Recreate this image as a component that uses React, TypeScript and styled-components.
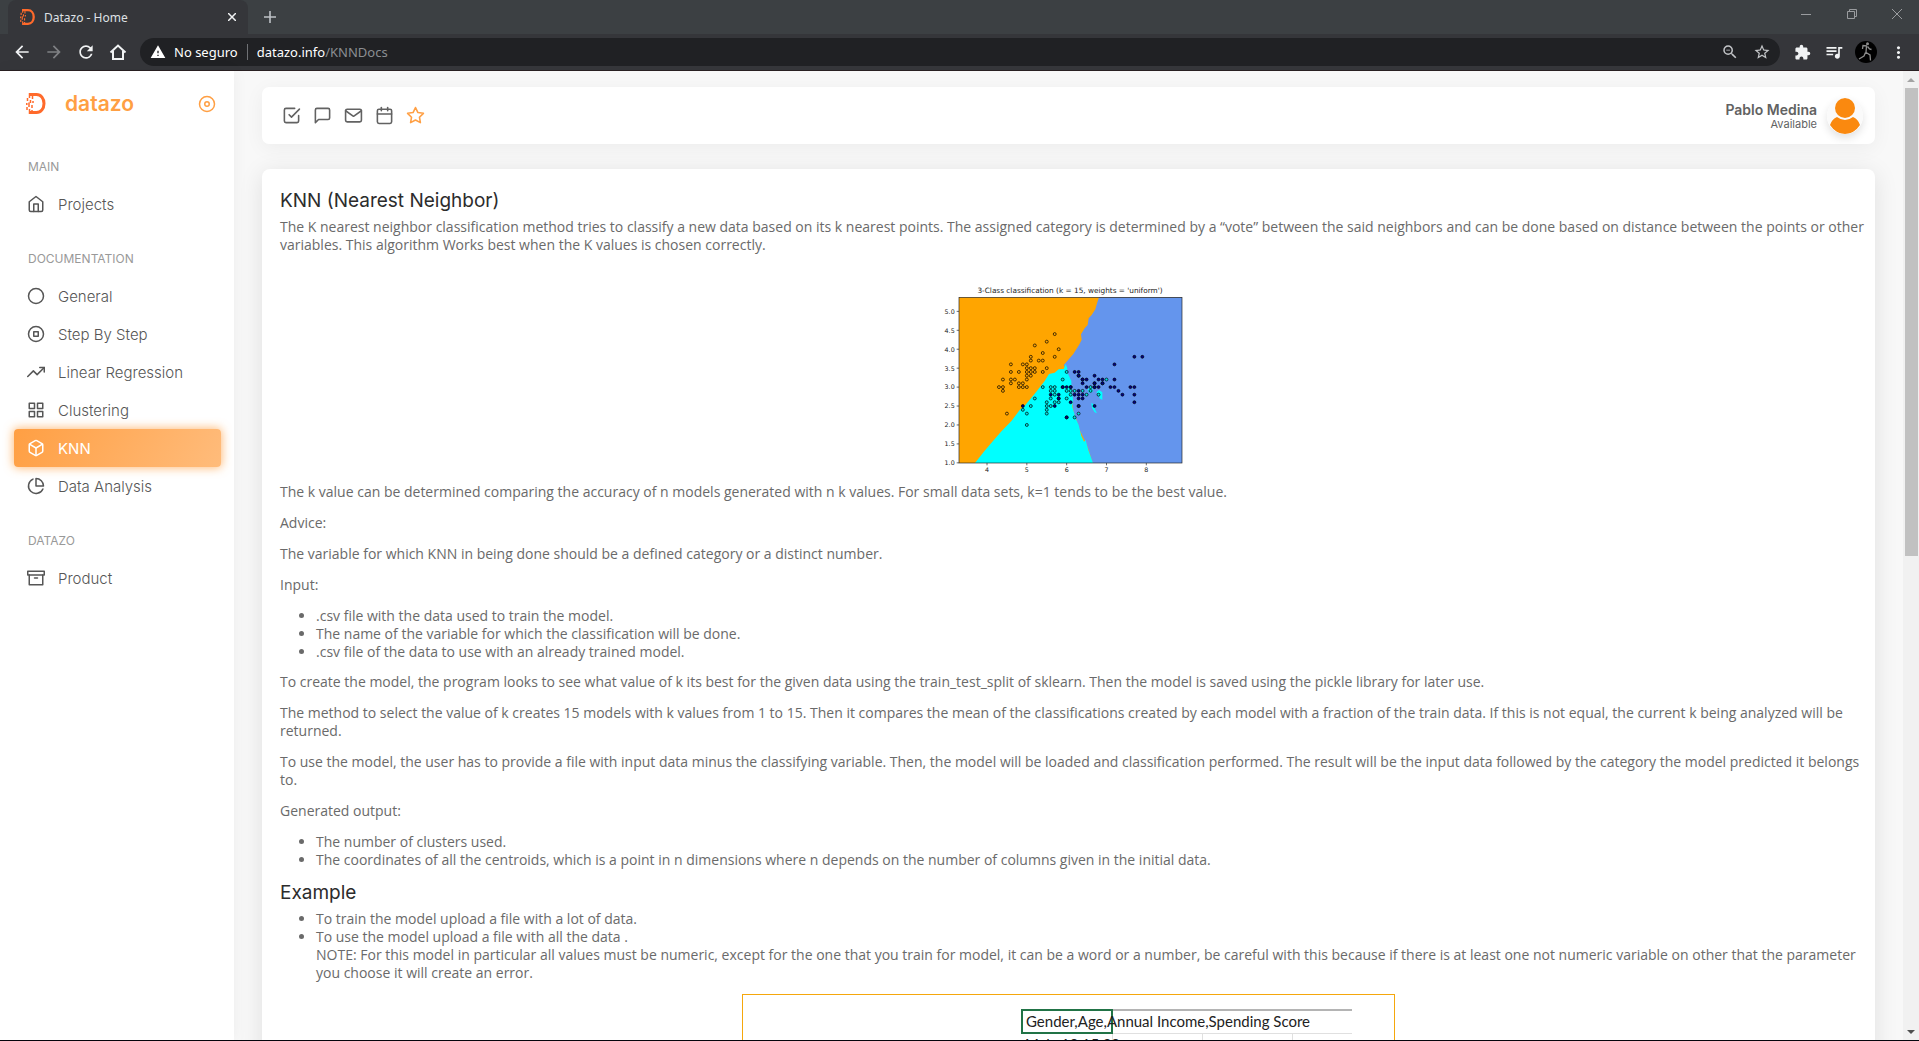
import React from "react";
import styled, { createGlobalStyle, css } from "styled-components";
import {
  FiArchive,
  FiBox,
  FiCalendar,
  FiCheckSquare,
  FiCircle,
  FiDisc,
  FiGrid,
  FiHome,
  FiMail,
  FiMessageSquare,
  FiPieChart,
  FiStar,
  FiStopCircle,
  FiTrendingUp,
} from "react-icons/fi";
import {
  MdArrowBack,
  MdArrowForward,
  MdExtension,
  MdMoreVert,
  MdQueueMusic,
  MdRefresh,
  MdStarBorder,
  MdWarning,
  MdZoomOut,
} from "react-icons/md";

const uiFont = `"Noto Sans", "Open Sans", sans-serif`;
const pageFont = `Inter, "Noto Sans", sans-serif`;
const proseFont = `"Open Sans", "Noto Sans", sans-serif`;
const orange = "#ff9f43";

const GlobalStyle = createGlobalStyle`
  *, *::before, *::after { box-sizing: border-box; }
  body { margin: 0; background: #f8f8f8; overflow: hidden; }
  button { border: 0; padding: 0; background: none; color: inherit; font: inherit; }
  a { color: inherit; text-decoration: none; }
`;

const Window = styled.div`
  display: flex;
  flex-direction: column;
  height: 100vh;
  border-bottom: 1px solid #05050d;
  font-family: ${pageFont};
`;

/* Browser frame */

const TabStrip = styled.div`
  display: flex;
  flex: none;
  height: 34px;
  padding-left: 8px;
  background: #3c4043;
  font-family: ${uiFont};
`;

const Tab = styled.div`
  display: flex;
  align-items: center;
  gap: 8px;
  width: 240px;
  padding: 0 8px 0 12px;
  border-radius: 8px 8px 0 0;
  background: #35363a;
  color: #dfe1e5;
  font-size: 12px;
`;

const TabTitle = styled.span`
  flex: 1;
  white-space: nowrap;
`;

const FrameButton = styled.button<{ $width: number; $color?: string }>`
  display: flex;
  align-items: center;
  justify-content: center;
  flex: none;
  width: ${(p) => p.$width}px;
  color: ${(p) => p.$color ?? "#f1f3f4"};
`;

const WindowButtons = styled.div`
  display: flex;
  margin-left: auto;
  padding-bottom: 6px;
`;

const AddressRow = styled.div`
  display: flex;
  align-items: center;
  flex: none;
  height: 37px;
  padding: 0 5px 0 6px;
  border-bottom: 1px solid #292022;
  background: #35363a;
  font-family: ${uiFont};
`;

const AddressBox = styled.div`
  display: flex;
  align-items: center;
  flex: 1;
  height: 28px;
  margin: 0 6px;
  padding: 0 2px 0 10px;
  border-radius: 14px;
  background: #202124;
  color: #fff;
  font-size: 13px;
`;

const SecurityLabel = styled.span`
  margin: 0 9px 0 8px;
  padding-right: 9px;
  border-right: 1px solid #6f7175;
  line-height: 16px;
`;

const Address = styled.span`
  flex: 1;
`;

const AddressPath = styled.span`
  color: #8b8e92;
`;

/* Page */

const Page = styled.div`
  display: flex;
  flex: 1;
  min-height: 0;
  background: #f8f8f8;
`;

const Sidebar = styled.aside`
  display: flex;
  flex-direction: column;
  flex: none;
  width: 234px;
  padding: 22px 13px 0 14px;
  background: #fff;
  box-shadow: 0 0 15px rgba(0, 0, 0, 0.05);
`;

const Brand = styled.div`
  display: flex;
  align-items: center;
  height: 21px;
  padding: 0 5px 0 12px;
  color: ${orange};
`;

const BrandName = styled.a`
  flex: 1;
  margin-left: 18px;
  font-size: 21px;
  font-weight: 600;
  line-height: 20px;
`;

const NavHeading = styled.h2`
  margin: 0;
  padding: 0 14px;
  color: #999;
  font-size: 12px;
  font-weight: 400;
  line-height: 18px;
`;

const NavList = styled.ul`
  margin: 0;
  padding: 9px 0 27px;
  list-style: none;
`;

const NavGroup = styled.section`
  &:first-of-type {
    margin-top: 44px;
  }
`;

const NavLink = styled.a<{ $active?: boolean }>`
  display: flex;
  align-items: center;
  gap: 13px;
  height: 38px;
  padding: 0 13px;
  border-radius: 4px;
  color: #565656;
  font-size: 15px;
  font-weight: 300;

  ${(p) =>
    p.$active &&
    css`
      background: linear-gradient(118deg, ${orange}, rgba(255, 159, 67, 0.7));
      box-shadow: 0 0 10px 1px rgba(255, 159, 67, 0.7);
      color: #fff;
      font-weight: 400;
    `}
`;

const Main = styled.main`
  flex: 1;
  min-width: 0;
  padding: 16px 28px 0;
  overflow: hidden;
`;

const Toolbar = styled.header`
  display: flex;
  align-items: center;
  height: 57px;
  margin-bottom: 25px;
  padding: 0 12px 0 20px;
  border-radius: 7px;
  background: #fff;
  box-shadow: 0 4px 20px rgba(0, 0, 0, 0.05);
`;

const Shortcuts = styled.div`
  display: flex;
  gap: 12px;
  color: #626262;
`;

const Shortcut = styled.button<{ $starred?: boolean }>`
  display: flex;
  color: ${(p) => (p.$starred ? orange : "inherit")};
`;

const User = styled.div`
  display: flex;
  align-items: center;
  gap: 10px;
  margin-left: auto;
  color: #626262;
  text-align: right;
`;

const UserText = styled.div`
  padding-top: 2px;
`;

const UserName = styled.div`
  font-size: 14px;
  font-weight: 600;
  line-height: 15px;
`;

const UserStatus = styled.div`
  font-size: 11px;
  line-height: 15px;
`;

const Avatar = styled.svg`
  border-radius: 50%;
  box-shadow: 0 4px 8px rgba(0, 0, 0, 0.12);
`;

const Card = styled.article`
  padding: 20px 6px 20px 18px;
  border-radius: 8px;
  background: #fff;
  box-shadow: 0 4px 25px rgba(0, 0, 0, 0.1);
  color: #6a6a6a;
  font-family: ${proseFont};
  font-size: 14px;
  line-height: 18px;
`;

const Title = styled.h3`
  margin: 0 0 5px;
  color: #2c2c2c;
  font-family: ${pageFont};
  font-size: 19px;
  font-weight: 400;
  line-height: 24px;
`;

const Text = styled.p`
  margin: 0 0 13px;
`;

const Bullets = styled.ul`
  margin: 0 0 12px;
  padding-left: 36px;
`;

const Figure = styled.figure`
  display: flex;
  justify-content: center;
  margin: 0 12px 0 0;
`;

const ChartFigure = styled(Figure)`
  margin-top: 17px;
`;

const SheetFrame = styled.div`
  width: 653px;
  padding: 14px 0 40px 278px;
  border: 1px solid #f5a70c;
`;

const Sheet = styled.table`
  width: 330px;
  table-layout: fixed;
  border-collapse: collapse;
  border-top: 2px solid #b4b4b4;
  color: #222;
  font-family: Lato, "Open Sans", sans-serif;
  font-size: 15px;
  line-height: 21px;
`;

const Cell = styled.td<{ $header?: boolean; $selected?: boolean }>`
  width: 90px;
  padding: 0 0 0 3px;
  border: 1px solid #e0e0e0;
  border-width: ${(p) => (p.$header ? "0 0 1px" : "0 1px 1px 0")};
  white-space: nowrap;

  &:last-child {
    width: 60px;
    border-right: 0;
  }

  ${(p) => p.$selected && "&& { border: 2px solid #217346; }"}
`;

const Scrollbar = styled.div`
  display: flex;
  flex-direction: column;
  align-items: center;
  flex: none;
  width: 16px;
  background: #f1f1f1;
`;

const ScrollArrow = styled.span<{ $down?: boolean }>`
  display: flex;
  align-items: center;
  justify-content: center;
  width: 100%;
  height: 17px;
  color: ${(p) => (p.$down ? "#505050" : "#a3a3a3")};
`;

const ScrollTrack = styled.div`
  flex: 1;
  width: 13px;
`;

const ScrollThumb = styled.div`
  height: 50%;
  background: #c1c1c1;
`;

const Logo = ({ size }: { size: number }) => (
  <svg width={size} height={size} viewBox="0 0 21 21" fill="none" stroke="#ff6a2b" aria-hidden="true">
    <path d="M3 1.500H10.500C15 1.500 18 5.500 18 10.500S15 19.500 10.500 19.500H4" strokeWidth="3" />
    <path d="M3.500 0V5M6.500 3V6M1.500 5V8M4.500 7V10M7 8V10M.8 10V12M3 9.500V14M6 12V15M1 14V17M3.500 16V21M6 17V19" strokeWidth="1.500" />
  </svg>
);

/* Iris measurements: sepal length and sepal width */

const setosa =
  "5.1 3.5,4.9 3.0,4.7 3.2,4.6 3.1,5.0 3.6,5.4 3.9,4.6 3.4,5.0 3.4,4.4 2.9,4.9 3.1,5.4 3.7,4.8 3.4,4.8 3.0,4.3 3.0,5.8 4.0,5.7 4.4,5.7 3.8,5.1 3.8,5.4 3.4,5.1 3.7,4.6 3.6,5.1 3.3,5.0 3.0,5.2 3.5,5.2 3.4,4.8 3.1,5.2 4.1,5.5 4.2,5.0 3.2,5.5 3.5,4.9 3.6,4.4 3.0,5.1 3.4,5.0 3.5,4.5 2.3,4.4 3.2,4.6 3.2,5.3 3.7,5.0 3.3";
const versicolor =
  "7.0 3.2,6.4 3.2,6.9 3.1,5.5 2.3,6.5 2.8,5.7 2.8,6.3 3.3,4.9 2.4,6.6 2.9,5.2 2.7,5.0 2.0,5.9 3.0,6.0 2.2,6.1 2.9,5.6 2.9,6.7 3.1,5.6 3.0,5.8 2.7,6.2 2.2,5.6 2.5,5.9 3.2,6.1 2.8,6.3 2.5,6.4 2.9,6.6 3.0,6.8 2.8,6.7 3.0,6.0 2.9,5.7 2.6,5.5 2.4,6.0 2.7,5.4 3.0,6.0 3.4,6.3 2.3,5.5 2.5,5.5 2.6,6.1 3.0,5.8 2.6,5.0 2.3,5.6 2.7,5.7 3.0,5.7 2.9,6.2 2.9,5.1 2.5";
const virginica =
  "6.3 3.3,5.8 2.7,7.1 3.0,6.3 2.9,6.5 3.0,7.6 3.0,4.9 2.5,7.3 2.9,6.7 2.5,7.2 3.6,6.5 3.2,6.4 2.7,6.8 3.0,5.7 2.5,5.8 2.8,6.4 3.2,7.7 3.8,7.7 2.6,6.0 2.2,6.9 3.2,5.6 2.8,7.7 2.8,6.3 2.7,6.7 3.3,7.2 3.2,6.2 2.8,6.1 3.0,6.4 2.8,7.2 3.0,7.4 2.8,7.9 3.8,6.3 2.8,6.1 2.6,7.7 3.0,6.3 3.4,6.4 3.1,6.0 3.0,6.9 3.1,6.7 3.1,6.8 3.2,6.7 3.0,6.3 2.5,6.2 3.4,5.9 3.0";

const plotX = (v: number) => 172 + (v - 4) * 119.5;
const plotY = (v: number) => 563.5 - (v - 1) * 113.6;

const Points = ({ data, fill }: { data: string; fill: string }) => (
  <g fill={fill} stroke="#000" strokeOpacity={0.8} strokeWidth={2.6}>
    {data.split(",").map((pair) => {
      const [x, y] = pair.split(" ").map(Number);
      return <circle key={pair} cx={plotX(x)} cy={plotY(y)} r={4.4} />;
    })}
  </g>
);

const Chart = () => (
  <svg
    width="288"
    height="212"
    viewBox="-14 -12 864 636"
    role="img"
    aria-label="3-Class classification"
    fontFamily="DejaVu Sans, sans-serif"
    fontSize="19"
    fill="#222"
  >
    <rect x="88" y="67" width="669" height="497" fill="#ffa500" />
    <path
      d="M508 67L503 82L497 103L486 120L477 130L474 150L465 160L454 178L456 194L448 210L431 237L416 254L402 270L412 285L413 305L420 330L424 350L428 385L432 412L440 432L450 465L463 492L468 500L477 525L489 564H757V67Z"
      fill="#6495ed"
    />
    <path
      d="M136 564L165 527L190 498L214 470L246 437L270 405L287 390L302 372L320 350L345 318L358 297L375 293L387 283L402 282L408 267L413 280L412 290L425 318L425 345L430 372L428 395L438 430L447 450L455 483L463 500L468 495L476 525L490 564Z"
      fill="#00ffff"
    />
    <path
      d="M485 383L497 392L495 402L502 415L495 412L487 398ZM508 345L518 352V375L510 370L506 358L500 352ZM474 342L487 338L490 350L478 354Z"
      fill="#00ffff"
    />
    <Points data={setosa} fill="#ffa500" />
    <Points data={versicolor} fill="#00e5e5" />
    <Points data={virginica} fill="#00008b" />
    <rect x="88" y="67" width="669" height="497" fill="none" stroke="#222" strokeWidth="2" />
    <text x="421" y="53" textAnchor="middle" fontSize="22">
      3-Class classification (k = 15, weights = 'uniform')
    </text>
    {[4, 5, 6, 7, 8].map((v) => (
      <g key={v}>
        <path d={`M${plotX(v)} 564v7`} stroke="#222" strokeWidth="2" />
        <text x={plotX(v)} y="592" textAnchor="middle">
          {v}
        </text>
      </g>
    ))}
    {[1, 1.5, 2, 2.5, 3, 3.5, 4, 4.5, 5].map((v) => (
      <g key={v}>
        <path d={`M88 ${plotY(v)}h-7`} stroke="#222" strokeWidth="2" />
        <text x="75" y={plotY(v) + 7} textAnchor="end">
          {v.toFixed(1)}
        </text>
      </g>
    ))}
  </svg>
);

const navigation = [
  { heading: "MAIN", links: [{ label: "Projects", Icon: FiHome }] },
  {
    heading: "DOCUMENTATION",
    links: [
      { label: "General", Icon: FiCircle },
      { label: "Step By Step", Icon: FiStopCircle },
      { label: "Linear Regression", Icon: FiTrendingUp },
      { label: "Clustering", Icon: FiGrid },
      { label: "KNN", Icon: FiBox },
      { label: "Data Analysis", Icon: FiPieChart },
    ],
  },
  { heading: "DATAZO", links: [{ label: "Product", Icon: FiArchive }] },
];

const shortcuts = [
  { label: "Todo", Icon: FiCheckSquare },
  { label: "Chat", Icon: FiMessageSquare },
  { label: "Email", Icon: FiMail },
  { label: "Calendar", Icon: FiCalendar },
  { label: "Bookmarks", Icon: FiStar },
];

const BrowserFrame = () => (
  <>
    <TabStrip>
      <Tab>
        <Logo size={16} />
        <TabTitle>Datazo - Home</TabTitle>
        <FrameButton $width={16} aria-label="Close tab">
          <svg width="8" height="8" viewBox="0 0 8 8" stroke="currentColor" strokeWidth="1.500">
            <path d="M0 0L8 8M8 0L0 8" />
          </svg>
        </FrameButton>
      </Tab>
      <FrameButton $width={44} $color="#bdc1c6" aria-label="New tab">
        <svg width="12" height="12" viewBox="0 0 12 12" stroke="currentColor" strokeWidth="1.600">
          <path d="M6 0V12M0 6H12" />
        </svg>
      </FrameButton>
      <WindowButtons>
        <FrameButton $width={46} $color="#9a9c9f" aria-label="Minimize">
          <svg width="10" height="10" stroke="currentColor">
            <path d="M0 5.500H10" />
          </svg>
        </FrameButton>
        <FrameButton $width={46} $color="#9a9c9f" aria-label="Restore">
          <svg width="10" height="10" fill="none" stroke="currentColor">
            <path d="M.5 2.500H7.500V9.500H.5ZM2.500 2.500V.5H9.500V7.500H7.500" />
          </svg>
        </FrameButton>
        <FrameButton $width={44} $color="#9a9c9f" aria-label="Close">
          <svg width="10" height="10" stroke="currentColor">
            <path d="M0 0L10 10M10 0L0 10" />
          </svg>
        </FrameButton>
      </WindowButtons>
    </TabStrip>
    <AddressRow>
      <FrameButton $width={32} aria-label="Back">
        <MdArrowBack size={20} />
      </FrameButton>
      <FrameButton $width={32} $color="#7f8184" aria-label="Forward">
        <MdArrowForward size={20} />
      </FrameButton>
      <FrameButton $width={32} aria-label="Reload">
        <MdRefresh size={20} />
      </FrameButton>
      <FrameButton $width={32} aria-label="Home">
        <svg width="18" height="18" viewBox="0 0 18 18" fill="none" stroke="currentColor" strokeWidth="2">
          <path d="M1.500 9.500L9 2.500L16.500 9.500M4 8V16H14V8" />
        </svg>
      </FrameButton>
      <AddressBox>
        <MdWarning size={16} />
        <SecurityLabel>No seguro</SecurityLabel>
        <Address>
          datazo.info<AddressPath>/KNNDocs</AddressPath>
        </Address>
        <FrameButton $width={32} $color="#c3c5c8" aria-label="Zoom">
          <MdZoomOut size={18} />
        </FrameButton>
        <FrameButton $width={32} $color="#c3c5c8" aria-label="Bookmark this page">
          <MdStarBorder size={18} />
        </FrameButton>
      </AddressBox>
      <FrameButton $width={32} aria-label="Extensions">
        <MdExtension size={17} />
      </FrameButton>
      <FrameButton $width={32} aria-label="Media">
        <MdQueueMusic size={20} />
      </FrameButton>
      <FrameButton $width={32} aria-label="Profile">
        <svg width="22" height="22" viewBox="0 0 22 22" fill="none" stroke="#8d8d8d" strokeWidth="1.300">
          <circle cx="11" cy="11" r="11" fill="#000" stroke="none" />
          <circle cx="12.500" cy="2.800" r="1.500" fill="#8d8d8d" stroke="none" />
          <path d="M11.500 5L11 11.500L15 14L15.500 19.500M10.500 11.500L9 15L4 18M12 5L8 4.500L7.500 8M12.500 5.500L14.500 8L16.500 8.500" />
        </svg>
      </FrameButton>
      <FrameButton $width={32} aria-label="Menu">
        <MdMoreVert size={19} />
      </FrameButton>
    </AddressRow>
  </>
);

export default function App() {
  return (
    <Window>
      <GlobalStyle />
      <BrowserFrame />
      <Page>
        <Sidebar>
          <Brand>
            <Logo size={21} />
            <BrandName href="#">datazo</BrandName>
            <FiDisc size={18} />
          </Brand>
          {navigation.map(({ heading, links }) => (
            <NavGroup key={heading}>
              <NavHeading>{heading}</NavHeading>
              <NavList>
                {links.map(({ label, Icon }) => (
                  <li key={label}>
                    <NavLink href="#" $active={label === "KNN"}>
                      <Icon size={18} />
                      {label}
                    </NavLink>
                  </li>
                ))}
              </NavList>
            </NavGroup>
          ))}
        </Sidebar>
        <Main>
          <Toolbar>
            <Shortcuts>
              {shortcuts.map(({ label, Icon }) => (
                <Shortcut key={label} aria-label={label} $starred={label === "Bookmarks"}>
                  <Icon size={19} />
                </Shortcut>
              ))}
            </Shortcuts>
            <User>
              <UserText>
                <UserName>Pablo Medina</UserName>
                <UserStatus>Available</UserStatus>
              </UserText>
              <Avatar width="36" height="36" viewBox="0 0 36 36" fill="#fa890f">
                <rect width="36" height="36" fill="#fafafa" />
                <circle cx="18" cy="10" r="10" />
                <path d="M10 19Q18 25 26 19Q31 21 33 27Q27 36 18 36Q9 36 3 27Q5 21 10 19Z" />
              </Avatar>
            </User>
          </Toolbar>
          <Card>
            <Title>KNN (Nearest Neighbor)</Title>
            <Text>
              The K nearest neighbor classification method tries to classify a new data based on its k nearest
              points. The assigned category is determined by a “vote” between the said neighbors and can be done
              based on distance between the points or other variables. This algorithm Works best when the K values
              is chosen correctly.
            </Text>
            <ChartFigure>
              <Chart />
            </ChartFigure>
            <Text>
              The k value can be determined comparing the accuracy of n models generated with n k values. For small
              data sets, k=1 tends to be the best value.
            </Text>
            <Text>Advice:</Text>
            <Text>The variable for which KNN in being done should be a defined category or a distinct number.</Text>
            <Text>Input:</Text>
            <Bullets>
              <li>.csv file with the data used to train the model.</li>
              <li>The name of the variable for which the classification will be done.</li>
              <li>.csv file of the data to use with an already trained model.</li>
            </Bullets>
            <Text>
              To create the model, the program looks to see what value of k its best for the given data using the
              train_test_split of sklearn. Then the model is saved using the pickle library for later use.
            </Text>
            <Text>
              The method to select the value of k creates 15 models with k values from 1 to 15. Then it compares the
              mean of the classifications created by each model with a fraction of the train data. If this is not
              equal, the current k being analyzed will be returned.
            </Text>
            <Text>
              To use the model, the user has to provide a file with input data minus the classifying variable. Then,
              the model will be loaded and classification performed. The result will be the input data followed by
              the category the model predicted it belongs to.
            </Text>
            <Text>Generated output:</Text>
            <Bullets>
              <li>The number of clusters used.</li>
              <li>
                The coordinates of all the centroids, which is a point in n dimensions where n depends on the number
                of columns given in the initial data.
              </li>
            </Bullets>
            <Title>Example</Title>
            <Bullets>
              <li>To train the model upload a file with a lot of data.</li>
              <li>
                To use the model upload a file with all the data .<br />
                NOTE: For this model in particular all values must be numeric, except for the one that you train for
                model, it can be a word or a number, be careful with this because if there is at least one not
                numeric variable on other that the parameter you choose it will create an error.
              </li>
            </Bullets>
            <Figure>
              <SheetFrame>
                <Sheet>
                  <tbody>
                    <tr>
                      <Cell $header $selected>
                        Gender,Age,Annual Income,Spending Score
                      </Cell>
                      <Cell $header />
                      <Cell $header />
                      <Cell $header />
                    </tr>
                    <tr>
                      <Cell>Male,19,15,39</Cell>
                      <Cell />
                      <Cell />
                      <Cell />
                    </tr>
                  </tbody>
                </Sheet>
              </SheetFrame>
            </Figure>
          </Card>
        </Main>
        <Scrollbar>
          <ScrollArrow>
            <svg width="8" height="4" fill="currentColor">
              <path d="M0 4L4 0L8 4Z" />
            </svg>
          </ScrollArrow>
          <ScrollTrack>
            <ScrollThumb />
          </ScrollTrack>
          <ScrollArrow $down>
            <svg width="8" height="4" fill="currentColor">
              <path d="M0 0H8L4 4Z" />
            </svg>
          </ScrollArrow>
        </Scrollbar>
      </Page>
    </Window>
  );
}
